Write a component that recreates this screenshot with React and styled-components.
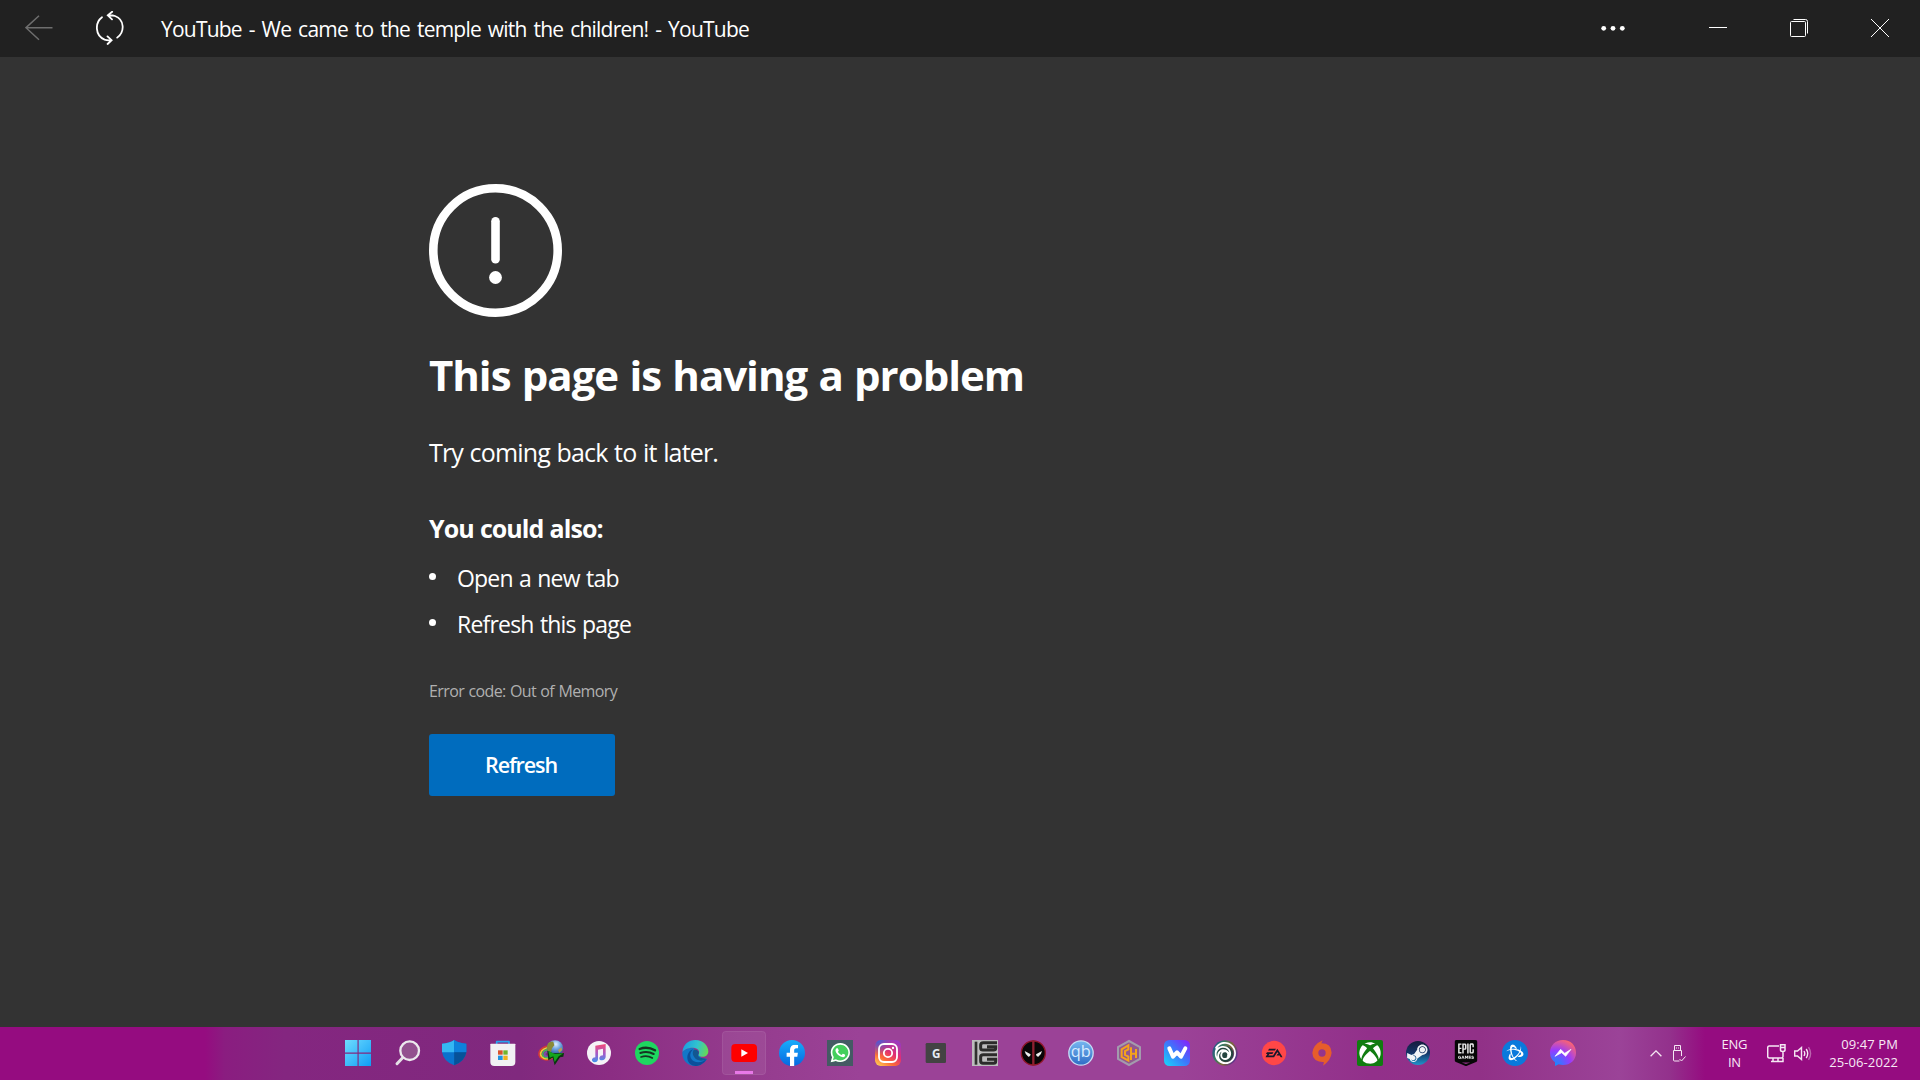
import React from 'react'
import styled, { createGlobalStyle } from 'styled-components'
import { FaWhatsapp, FaXbox, FaSteamSymbol, FaFacebookF } from 'react-icons/fa'
import { SiUbisoft, SiEa, SiEpicgames, SiBattledotnet } from 'react-icons/si'

function TitleBar() {
  return (
    <Bar>
      <BackIcon viewBox="0 0 28 26">
        <path d="M27.5 12.7H1M14 .8L1 12.7L14 24.8" />
      </BackIcon>
      <ReloadIcon viewBox="0 0 28 34">
        <path d="M6 6.2C-1.2 11.6 -1.2 24.6 8.6 28.6Q11 29.5 15 29.2M11.5 25.4L15.6 29.2L11.6 33" />
        <path d="M21.2 26.6C29 20.8 28.6 8.6 19 5Q16.3 4 12 4.3M16.2 .8L11.8 4.4L16 8.4" />
      </ReloadIcon>
      <PageTitle>YouTube - We came to the temple with the children! - YouTube</PageTitle>
      <MoreIcon viewBox="0 0 24 6">
        <circle cx="2.7" cy="3.3" r="2.4" />
        <circle cx="12" cy="3.3" r="2.4" />
        <circle cx="21.3" cy="3.3" r="2.4" />
      </MoreIcon>
      <WindowButtons>
        <WindowButton>
          <svg viewBox="0 0 18 18"><path d="M0 8.5H18" /></svg>
        </WindowButton>
        <WindowButton>
          <svg viewBox="0 0 18 18">
            <rect x=".5" y="2.5" width="15" height="15" rx="1" />
            <path d="M3.5 .5H15.5Q17.5 .5 17.5 2.5V14.5" />
          </svg>
        </WindowButton>
        <WindowButton>
          <svg viewBox="0 0 18 18"><path d="M0 0L18 18M18 0L0 18" /></svg>
        </WindowButton>
      </WindowButtons>
    </Bar>
  )
}

function ErrorPage() {
  return (
    <Page>
      <AlertIcon viewBox="0 0 133 133">
        <circle cx="66.5" cy="66.5" r="62.2" fill="none" stroke="#fff" strokeWidth="8.6" />
        <rect x="62.2" y="33" width="8.6" height="46.5" rx="4.3" fill="#fff" />
        <circle cx="66.5" cy="93.5" r="6.4" fill="#fff" />
      </AlertIcon>
      <Heading>This page is having a problem</Heading>
      <Lead>Try coming back to it later.</Lead>
      <SubHeading>You could also:</SubHeading>
      <Tips>
        <Tip>Open a new tab</Tip>
        <Tip>Refresh this page</Tip>
      </Tips>
      <ErrorCode>Error code: Out of Memory</ErrorCode>
      <RefreshButton>Refresh</RefreshButton>
    </Page>
  )
}

const LogoText = styled.text`
    font-family: "Open Sans", sans-serif;
    font-size: ${props => props.$size}px;
    font-weight: ${props => props.$weight || 700};
    fill: ${props => props.$color};
    text-anchor: middle;
`

/* Every taskbar icon is drawn on a 78 x 78 grid and shown at 26px */
const icons = {
  start: (
    <>
      <linearGradient id="win" x1="0" y1="0" x2="1" y2="1">
        <stop offset="0" stopColor="#6fdcff" />
        <stop offset="1" stopColor="#0f9df5" />
      </linearGradient>
      <path fill="url(#win)" d="M0 0H37.5V37.5H0ZM41 0H78V37.5H41ZM0 41H37.5V78H0ZM41 41H78V78H41Z" />
    </>
  ),
  search: (
    <>
      <path d="M29 53L12 71" stroke="#e4dfe6" strokeWidth="9" strokeLinecap="round" />
      <circle cx="50" cy="32" r="28" fill="#93508f" stroke="#ece9ee" strokeWidth="7" />
    </>
  ),
  defender: (
    <>
      <path d="M39.5 0Q54 10 76 11V36Q72 64 39.5 76Q7 64 3 36V11Q25 10 39.5 0Z" fill="#0a72cd" />
      <path d="M39.5 0Q25 10 3 11V37H39.5Z" fill="#35b8f3" />
      <path d="M39.5 0Q54 10 76 11V37H39.5Z" fill="#0f82dc" />
      <path d="M39.5 76Q72 64 76 37H39.5Z" fill="#075299" />
    </>
  ),
  store: (
    <>
      <path d="M20 16V5H57V16" fill="none" stroke="#27a4ef" strokeWidth="5" strokeLinejoin="round" />
      <path d="M1 13Q1 11 3 11H74Q76 11 76 13V66Q76 78 64 78H13Q1 78 1 66Z" fill="#f1f1f3" />
      <path d="M24 31H38V44H24Z" fill="#d9532c" />
      <path d="M40 31H53V44H40Z" fill="#71b52b" />
      <path d="M24 47H38V60H24Z" fill="#2094e0" />
      <path d="M40 47H53V60H40Z" fill="#f1b31d" />
    </>
  ),
  idm: (
    <>
      <radialGradient id="globe" cx=".55" cy=".25" r=".75">
        <stop offset="0" stopColor="#e2f0ff" />
        <stop offset=".4" stopColor="#6ea4e0" />
        <stop offset="1" stopColor="#1c3c83" />
      </radialGradient>
      <g fill="none" transform="rotate(-14 28 38)">
        <ellipse cx="28" cy="39" rx="26" ry="20" stroke="#d83a35" strokeWidth="5" />
        <ellipse cx="29" cy="40" rx="22" ry="16" stroke="#efd22c" strokeWidth="5" />
        <ellipse cx="30" cy="41" rx="17" ry="12" stroke="#42b95c" strokeWidth="5" />
        <ellipse cx="31" cy="42" rx="12" ry="7" stroke="#7b52ad" strokeWidth="5" />
      </g>
      <circle cx="51" cy="25" r="24.5" fill="url(#globe)" />
      <path d="M30 10Q38 3 46 5L49 16L42 25L39 36L28 32Q25 19 30 10Z" fill="#8a8a36" />
      <path d="M60 30L70 22L73 30L64 38Z" fill="#b89a5a" />
      <path d="M28 32L44 40L78 39L76 50L66 52L50 76L44 53L31 61Z" fill="#0b360f" />
      <path d="M31 33L51 42L76 40L62 49L50 66L46 49L35 53Z" fill="#15a51d" />
    </>
  ),
  itunes: (
    <>
      <linearGradient id="note" x1="0" y1="0" x2="0" y2="1">
        <stop offset="0" stopColor="#f54a77" />
        <stop offset=".55" stopColor="#a15bcb" />
        <stop offset="1" stopColor="#3a98ed" />
      </linearGradient>
      <circle cx="39" cy="39" r="36" fill="#f5f2f7" />
      <path d="M28 17L59 12V51Q58 60 48 61Q39 61 40 53Q42 46 51 46V26L36 29V58Q35 67 26 67Q17 66 18 58Q20 52 28 52Z" fill="url(#note)" />
    </>
  ),
  spotify: (
    <>
      <circle cx="39" cy="39" r="36" fill="#1ed760" />
      <g fill="none" stroke="#173322" strokeLinecap="round">
        <path d="M17 27Q40 18 63 31" strokeWidth="7" />
        <path d="M19 39Q40 32 59 42" strokeWidth="6" />
        <path d="M21 51Q39 45 55 54" strokeWidth="5" />
      </g>
    </>
  ),
  edge: (
    <>
      <linearGradient id="edgeTop" x1="0" y1=".3" x2="1" y2=".5">
        <stop offset="0" stopColor="#1b9de2" />
        <stop offset=".55" stopColor="#31c3cf" />
        <stop offset="1" stopColor="#65d957" />
      </linearGradient>
      <path d="M1 36Q14 22 34 24L58 54L75 57C67 70 54 78 40 78C17 78 -1 60 1 36Z" fill="#1277c8" />
      <path d="M1 36C4 12 20 0 40 0C63 0 79 17 79 34C79 47 68 52 58 50C50 49 48 45 51 40C54 33 47 24 34 23C20 22 6 29 1 36Z" fill="url(#edgeTop)" />
      <path d="M34 28C21 38 22 57 36 64C48 70 62 66 74 57C67 70 54 78 40 78C19 76 12 56 18 42C22 33 28 29 34 28Z" fill="#0c4f9b" />
      <path d="M35 30C44 27 53 34 50 41C46 46 49 52 58 54L74 57C59 66 44 62 37 52C31 43 31 35 35 30Z" fill="#125791" />
    </>
  ),
  youtube: (
    <>
      <rect x="1" y="12" width="77" height="54" rx="12" fill="#fe0000" />
      <path d="M31 28L51 39L31 50Z" fill="#fff" />
    </>
  ),
  facebook: (
    <>
      <linearGradient id="fb" x1="0" y1="0" x2="0" y2="1">
        <stop offset="0" stopColor="#18adfb" />
        <stop offset="1" stopColor="#0668e1" />
      </linearGradient>
      <circle cx="39" cy="39" r="39" fill="url(#fb)" />
      <FaFacebookF x="8" y="14" size="64" color="#fff" />
    </>
  ),
  whatsapp: (
    <>
      <rect width="78" height="78" fill="#455a64" />
      <path d="M11 67L15 52A28 28 0 1 1 27 63Z" fill="#44cf5c" />
      <FaWhatsapp x="7" y="5" size="66" color="#fff" />
    </>
  ),
  instagram: (
    <>
      <linearGradient id="ig" x1=".1" y1="1" x2=".75" y2="0">
        <stop offset="0" stopColor="#ffcf55" />
        <stop offset=".3" stopColor="#fd6b37" />
        <stop offset=".6" stopColor="#e22f72" />
        <stop offset="1" stopColor="#9a38c0" />
      </linearGradient>
      <radialGradient id="igBlue" cx=".1" cy="0" r=".6">
        <stop offset="0" stopColor="#455dd6" />
        <stop offset="1" stopColor="#455dd6" stopOpacity="0" />
      </radialGradient>
      <rect width="78" height="78" rx="17" fill="url(#ig)" />
      <rect width="78" height="78" rx="17" fill="url(#igBlue)" />
      <g fill="none" stroke="#fff" strokeWidth="5.5">
        <rect x="12" y="12" width="54" height="54" rx="15" />
        <circle cx="39" cy="39" r="12.5" />
      </g>
      <circle cx="54" cy="24" r="3.5" fill="#fff" />
    </>
  ),
  gApp: (
    <>
      <rect x="8" y="9" width="61" height="60" rx="4" fill="#434343" />
      <LogoText x="40" y="55" $size={35} $color="#e6edf5">G</LogoText>
    </>
  ),
  igg: (
    <>
      <rect width="78" height="78" fill="#bcbcbd" />
      <rect x="8" y="5" width="8" height="69" fill="#30302f" />
      <g fill="none" stroke="#2b2b2a" strokeWidth="9">
        <path d="M75 8H34Q26 8 26 15V24Q26 30 33 30H65Q71 30 71 25V20H45" />
        <path d="M75 44H34Q26 44 26 50V63Q26 70 33 70H65Q71 70 71 64V58H45" />
      </g>
    </>
  ),
  deadpool: (
    <>
      <circle cx="40" cy="39" r="36" fill="#090607" stroke="#8f1627" strokeWidth="4" />
      <rect x="36.5" y="1" width="7" height="76" fill="#8e2030" />
      <path d="M14 33L32 43Q31 51 25 50Q16 45 14 33ZM66 33L48 43Q49 51 55 50Q64 45 66 33Z" fill="#eee" />
    </>
  ),
  qbittorrent: (
    <>
      <linearGradient id="qb" x1="0" y1="0" x2="0" y2="1">
        <stop offset="0" stopColor="#77b7f0" />
        <stop offset="1" stopColor="#2e6cc5" />
      </linearGradient>
      <circle cx="39" cy="39" r="36.5" fill="url(#qb)" stroke="#c6dcf4" strokeWidth="4" />
      <LogoText x="38" y="50" $size={49} $weight={400} $color="#d9ecff">qb</LogoText>
    </>
  ),
  cheat: (
    <>
      <path d="M39 3L72 21V57L39 75L6 57V21Z" fill="#92598f" stroke="#a39bad" strokeWidth="6" />
      <path d="M37 16L17 28V51L37 62V50L27 45V33L37 28ZM45 22V60M45 41H60M60 27V54" fill="none" stroke="#f5a31b" strokeWidth="6" />
    </>
  ),
  wemod: (
    <>
      <linearGradient id="wm" x1="0" y1="1" x2="1" y2="0">
        <stop offset="0" stopColor="#17d9fa" />
        <stop offset=".5" stopColor="#3c78fb" />
        <stop offset="1" stopColor="#8b19fb" />
      </linearGradient>
      <rect width="78" height="78" rx="16" fill="url(#wm)" />
      <path d="M16 25L27 50L39 37L51 50L64 25" fill="none" stroke="#fff" strokeWidth="12" strokeLinejoin="round" strokeLinecap="round" />
    </>
  ),
  ubisoft: (
    <>
      <linearGradient id="ubi" x1="0" y1="0" x2="1" y2=".5">
        <stop offset="0" stopColor="#20429b" />
        <stop offset=".4" stopColor="#387a61" />
        <stop offset=".7" stopColor="#82653a" />
        <stop offset="1" stopColor="#5d3488" />
      </linearGradient>
      <circle cx="39" cy="39" r="38" fill="url(#ubi)" />
      <circle cx="40" cy="42" r="24" fill="#25453f" />
      <SiUbisoft x="7" y="6" size="66" color="#fff" />
    </>
  ),
  ea: (
    <>
      <circle cx="39" cy="39" r="36.5" fill="#ff4747" />
      <SiEa x="13" y="13" size="52" color="#16182b" />
    </>
  ),
  origin: (
    <path
      d="M41 1L37 10Q67 10 68 38Q66 60 42 77L45 67Q11 66 10 39Q12 14 41 1ZM39 28A11 11 0 1 0 39 50A11 11 0 1 0 39 28Z"
      fill="#e65d2b"
      fillRule="evenodd"
    />
  ),
  xbox: (
    <>
      <rect width="78" height="78" rx="6" fill="#107c10" />
      <FaXbox x="6" y="6" size="66" color="#fff" />
    </>
  ),
  steam: (
    <>
      <linearGradient id="stm" x1="0" y1="0" x2="0" y2="1">
        <stop offset="0" stopColor="#171b3d" />
        <stop offset=".5" stopColor="#143567" />
        <stop offset="1" stopColor="#2094cc" />
      </linearGradient>
      <circle cx="39" cy="39" r="36" fill="url(#stm)" />
      <FaSteamSymbol x="2" y="5" size="70" color="#f1f4f7" />
    </>
  ),
  epic: (
    <>
      <rect x="11" y="6" width="56" height="56" fill="#e6e6e6" />
      <SiEpicgames x="0" y="0" size="78" color="#070707" />
    </>
  ),
  battlenet: (
    <>
      <circle cx="39" cy="39" r="39" fill="#0a79dc" />
      <SiBattledotnet x="13" y="13" size="52" color="#fff" />
    </>
  ),
  messenger: (
    <>
      <radialGradient id="msg" cx=".2" cy="1" r="1.1">
        <stop offset="0" stopColor="#0a91ff" />
        <stop offset=".55" stopColor="#963bff" />
        <stop offset="1" stopColor="#ff656c" />
      </radialGradient>
      <path d="M39 0C62 0 78 16 78 38C78 60 61 75 39 75Q32 75 26 73L15 78V67Q0 56 0 38C0 16 17 0 39 0Z" fill="url(#msg)" />
      <path d="M15 49L32 28L44 40L63 28L47 49L35 38Z" fill="#fff" stroke="#fff" strokeWidth="2" />
    </>
  ),
}

function TaskBar() {
  return (
    <Tasks>
      <Apps>
        {Object.keys(icons).map((name) => (
          <TaskIcon key={name} $active={name === 'youtube'}>
            <svg viewBox="0 0 78 78">{icons[name]}</svg>
          </TaskIcon>
        ))}
      </Apps>
      <Tray>
        <TrayIcon viewBox="0 0 12 7" $w={12} $h={7} $gap={11} $stroke={1.3}>
          <path d="M.6 6.3L6 .9L11.4 6.3" />
        </TrayIcon>
        <TrayIcon viewBox="0 0 13 17" $w={13} $h={17} $gap={36}>
          <path d="M6.5 16H1.5Q.5 16 .5 15V5.5H8.5V11M1.5 5.5V.5H7.5V5.5M3 3H4M5 3H6M6.5 14L8.5 16L12.5 11.5" />
        </TrayIcon>
        <TrayText $gap={20} $align="center" $spacing={-0.3}>
          <span>ENG</span>
          <span>IN</span>
        </TrayText>
        <TrayIcon viewBox="0 0 19 19" $w={19} $h={19} $gap={8} $stroke={1.5}>
          <path d="M12 2H2.2Q.7 2 .7 3.5V12.5Q.7 14 2.2 14H14.5Q16 14 16 12.5V8M6 14V17.5M11 14V17.5M4 17.6H16V14M13.5 .8H18V6Q18 7.5 15.7 7.5Q13.5 7.5 13.5 6ZM13.5 3.5H18" />
        </TrayIcon>
        <TrayIcon viewBox="0 0 18 15" $w={18} $h={15} $gap={17} $stroke={1.4}>
          <path d="M.7 5V10H3.5L7.5 13.5V1.5L3.5 5ZM10 5Q11.5 7.5 10 10M12.2 3Q15.2 7.5 12.2 12" />
          <path d="M14.5 1.2Q18.7 7.5 14.5 13.8" opacity=".4" />
        </TrayIcon>
        <TrayText $align="flex-end" $spacing={0.1}>
          <span>09:47 PM</span>
          <span>25-06-2022</span>
        </TrayText>
      </Tray>
    </Tasks>
  )
}

function App() {
  return (
    <Screen>
      <GlobalStyle />
      <TitleBar />
      <ErrorPage />
      <TaskBar />
    </Screen>
  )
}

export default App

const GlobalStyle = createGlobalStyle`
    * {
        box-sizing: border-box;
    }
    body {
        margin: 0;
        background: #333333;
        font-family: "Open Sans", "Noto Sans", sans-serif;
        overflow: hidden;
    }
    h1, h2, p, ul {
        margin: 0;
        padding: 0;
    }
`

const Screen = styled.div`
    width: 1920px;
    height: 1080px;
    display: flex;
    flex-direction: column;
    color: white;
    white-space: nowrap;
`

const Bar = styled.header`
    height: 57px;
    flex: none;
    background: #212121;
    display: flex;
    align-items: center;
    padding-left: 25px;
    padding-bottom: 1px;
`

const BackIcon = styled.svg`
    width: 28px;
    height: 26px;
    margin-right: 43px;
    margin-bottom: 1px;
    fill: none;
    stroke: #6e6e6e;
    stroke-width: 1.5;
`

const ReloadIcon = styled.svg`
    width: 28px;
    height: 34px;
    margin-right: 37px;
    fill: none;
    stroke: white;
    stroke-width: 1.8;
    stroke-linecap: round;
`

const PageTitle = styled.div`
    flex: 1;
    font-size: 21px;
    line-height: 30px;
    letter-spacing: -0.78px;
    word-spacing: 2.2px;
    padding-top: 2px;
`

const MoreIcon = styled.svg`
    width: 24px;
    height: 6px;
    margin-right: 52px;
    fill: white;
`

const WindowButtons = styled.div`
    display: flex;
`

const WindowButton = styled.div`
    width: 81px;
    height: 56px;
    display: flex;
    justify-content: center;
    align-items: center;
    svg {
        width: 18px;
        height: 18px;
        fill: none;
        stroke: white;
        stroke-width: 1;
        overflow: visible;
    }
`

const Page = styled.main`
    flex: 1;
    min-height: 0;
    background: #333333;
    padding: 127px 0 0 429px;
    display: flex;
    flex-direction: column;
    align-items: flex-start;
`

const AlertIcon = styled.svg`
    width: 133px;
    height: 133px;
    flex: none;
`

const Heading = styled.h1`
    margin-top: 30px;
    font-size: 42px;
    line-height: 56px;
    font-weight: 700;
    letter-spacing: -1.03px;
    word-spacing: 1.4px;
`

const Lead = styled.p`
    margin-top: 32px;
    font-size: 25px;
    line-height: 34px;
    letter-spacing: -0.85px;
    word-spacing: 1px;
`

const SubHeading = styled.h2`
    margin-top: 42px;
    font-size: 25px;
    line-height: 34px;
    font-weight: 700;
    letter-spacing: -0.95px;
    word-spacing: 0.7px;
`

const Tips = styled.ul`
    margin-top: 18px;
    display: flex;
    flex-direction: column;
    gap: 16px;
    list-style: none;
`

const Tip = styled.li`
    display: flex;
    font-size: 23px;
    line-height: 30px;
    letter-spacing: -0.8px;
    word-spacing: 1.1px;
    &::before {
        content: "";
        width: 7px;
        height: 7px;
        margin: 10px 21px 0 0;
        border-radius: 50%;
        background: white;
    }
`

const ErrorCode = styled.p`
    margin-top: 41px;
    font-size: 16px;
    line-height: 22px;
    letter-spacing: -0.6px;
    word-spacing: 0.7px;
    color: #b0b0b0;
`

const RefreshButton = styled.button`
    margin-top: 32px;
    width: 186px;
    height: 62px;
    border: none;
    border-radius: 3px;
    padding: 0 2px 2px 0;
    background: #006cbe;
    color: white;
    font-family: inherit;
    font-size: 21.5px;
    font-weight: 600;
    letter-spacing: -1.1px;
`

const Tasks = styled.footer`
    height: 53px;
    flex: none;
    display: flex;
    background: linear-gradient(
        90deg,
        #950c80 0,
        #950c80 205px,
        #8a1d80 225px,
        #842680 285px,
        #80297e 520px,
        #8b2d83 610px,
        #943b8d 740px,
        #9b4297 860px,
        #9b4297 1180px,
        #92308a 1370px,
        #913187 1480px,
        #9b4398 1620px,
        #93318c 1670px,
        #950c80 1705px
    );
`

const Apps = styled.div`
    width: 1253px;
    margin-left: 334px;
    display: flex;
`

const TaskIcon = styled.div`
    width: 48.2px;
    height: 52px;
    flex: none;
    display: flex;
    justify-content: center;
    align-items: center;
    > svg {
        width: 26px;
        height: 26px;
        overflow: visible;
    }
    ${props => props.$active && `
        height: 44px;
        margin-top: 4px;
        width: 44px;
        margin-left: 2.1px;
        margin-right: 2.1px;
        border-radius: 4px;
        background: linear-gradient(#e878e8, #e878e8) center bottom 1px / 18px 3px no-repeat, rgba(255, 255, 255, 0.07);
        box-shadow: inset 0 0 0 1px rgba(255, 255, 255, 0.07);
    `}
`

const Tray = styled.div`
    flex: 1;
    display: flex;
    justify-content: flex-end;
    align-items: center;
    padding: 0 22px 1px 0;
`

const TrayIcon = styled.svg`
    width: ${props => props.$w}px;
    height: ${props => props.$h}px;
    margin-right: ${props => props.$gap}px;
    fill: none;
    stroke: #f5e8f3;
    stroke-width: ${props => props.$stroke || 1};
`

const TrayText = styled.div`
    display: flex;
    flex-direction: column;
    align-items: ${props => props.$align};
    margin-right: ${props => props.$gap || 0}px;
    font-size: 13px;
    line-height: 18px;
    letter-spacing: ${props => props.$spacing}px;
    color: #f8e9f5;
`
